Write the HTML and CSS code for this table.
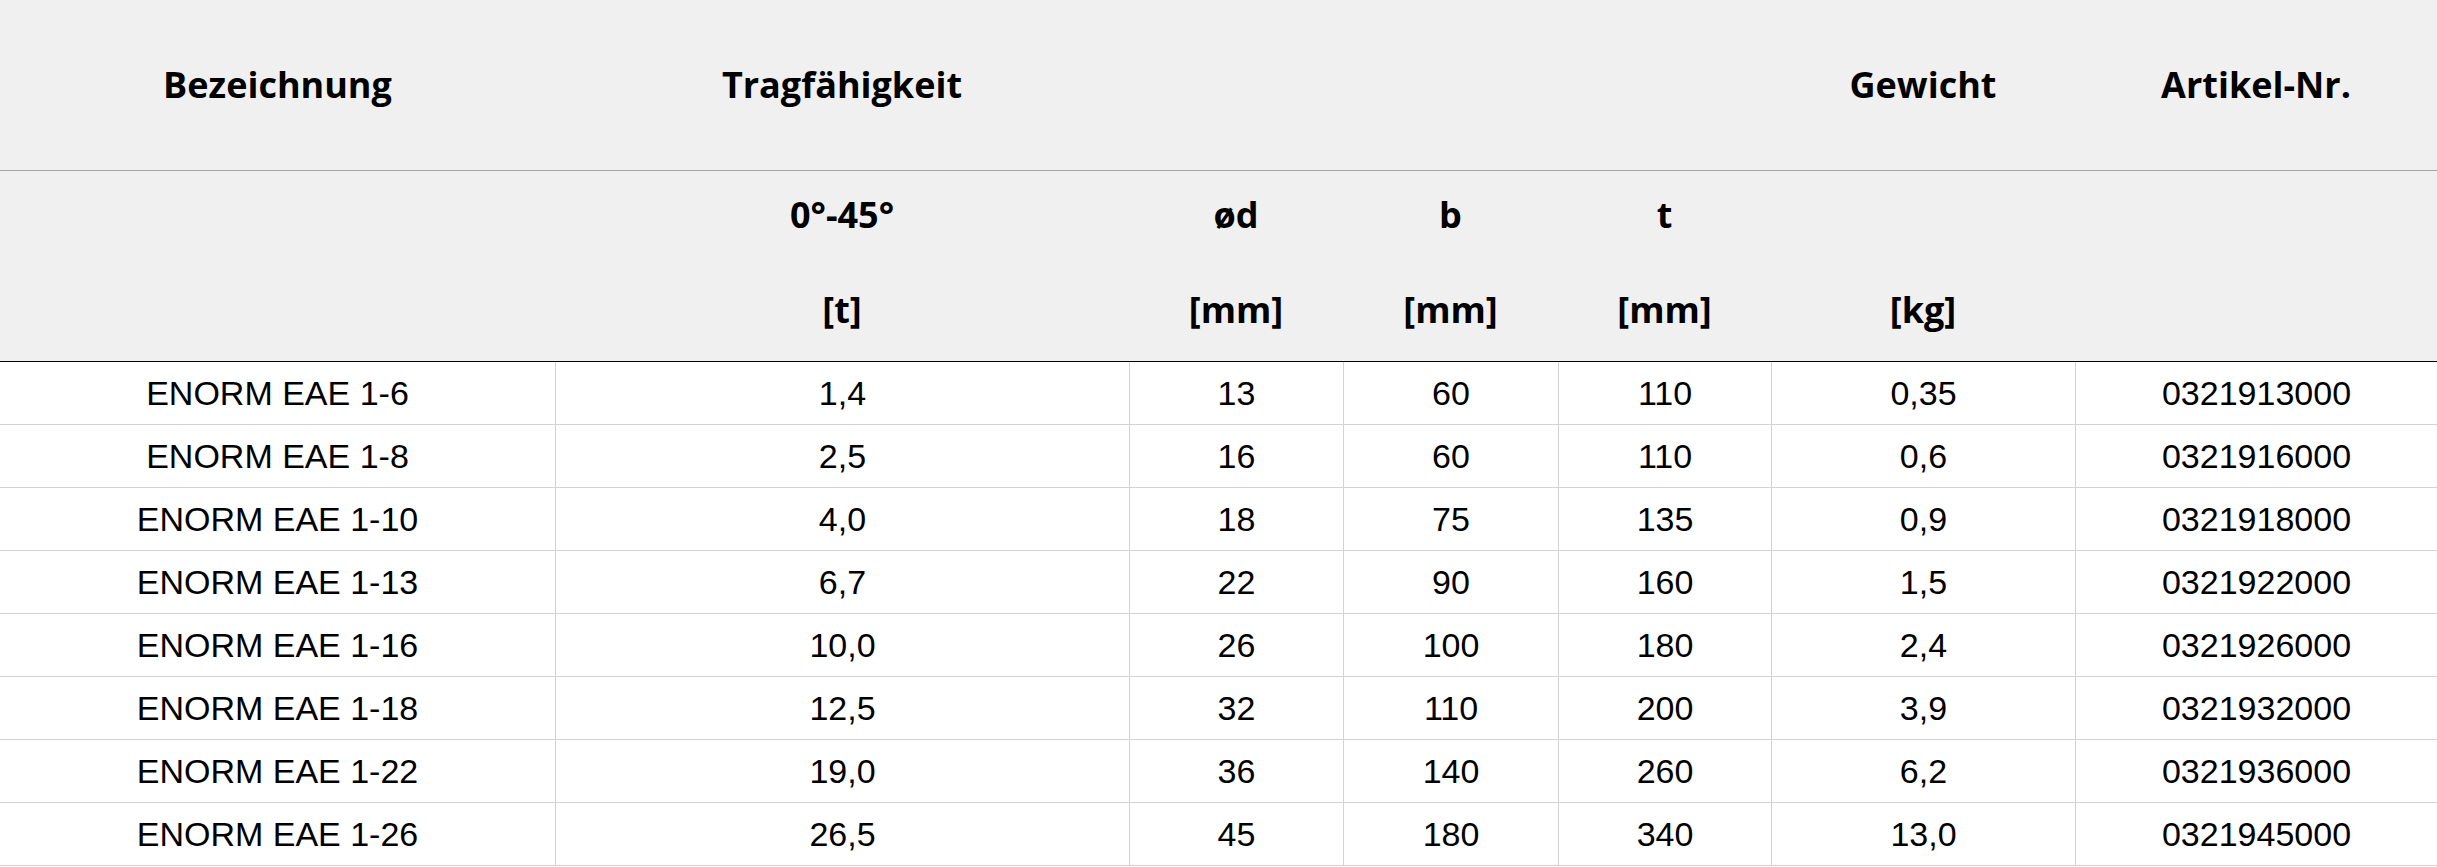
FILE: index.html
```html
<!DOCTYPE html>
<html lang="de">
<head>
<meta charset="utf-8">
<title>ENORM EAE</title>
<link rel="stylesheet" href="styles.css">
</head>
<body>
<table class="spec">
  <colgroup>
    <col class="c1"><col class="c2"><col class="c3"><col class="c4"><col class="c5"><col class="c6"><col class="c7">
  </colgroup>
  <thead>
    <tr class="h1">
      <th>Bezeichnung</th><th>Tragfähigkeit</th><th></th><th></th><th></th><th>Gewicht</th><th>Artikel-Nr.</th>
    </tr>
    <tr class="h2">
      <th></th><th>0°-45°</th><th>ød</th><th>b</th><th>t</th><th></th><th></th>
    </tr>
    <tr class="h3">
      <th></th><th>[t]</th><th>[mm]</th><th>[mm]</th><th>[mm]</th><th>[kg]</th><th></th>
    </tr>
  </thead>
  <tbody>
    <tr><td>ENORM EAE 1-6</td><td>1,4</td><td>13</td><td>60</td><td>110</td><td>0,35</td><td>0321913000</td></tr>
    <tr><td>ENORM EAE 1-8</td><td>2,5</td><td>16</td><td>60</td><td>110</td><td>0,6</td><td>0321916000</td></tr>
    <tr><td>ENORM EAE 1-10</td><td>4,0</td><td>18</td><td>75</td><td>135</td><td>0,9</td><td>0321918000</td></tr>
    <tr><td>ENORM EAE 1-13</td><td>6,7</td><td>22</td><td>90</td><td>160</td><td>1,5</td><td>0321922000</td></tr>
    <tr><td>ENORM EAE 1-16</td><td>10,0</td><td>26</td><td>100</td><td>180</td><td>2,4</td><td>0321926000</td></tr>
    <tr><td>ENORM EAE 1-18</td><td>12,5</td><td>32</td><td>110</td><td>200</td><td>3,9</td><td>0321932000</td></tr>
    <tr><td>ENORM EAE 1-22</td><td>19,0</td><td>36</td><td>140</td><td>260</td><td>6,2</td><td>0321936000</td></tr>
    <tr><td>ENORM EAE 1-26</td><td>26,5</td><td>45</td><td>180</td><td>340</td><td>13,0</td><td>0321945000</td></tr>
  </tbody>
</table>
</body>
</html>
```
FILE: styles.css
```css
html, body {
  margin: 0;
  padding: 0;
  background: #ffffff;
}
.spec {
  width: 2437px;
  table-layout: fixed;
  border-collapse: separate;
  border-spacing: 0;
  color: #000;
}
.c1 { width: 555px; }
.c2 { width: 574px; }
.c3 { width: 214px; }
.c4 { width: 215px; }
.c5 { width: 213px; }
.c6 { width: 304px; }
.c7 { width: 362px; }
.spec th {
  box-sizing: border-box;
  background: #f0f0f0;
  font-family: "Open Sans", "Liberation Sans", sans-serif;
  font-weight: 700;
  font-size: 36px;
  line-height: 40px;
  padding: 0;
  text-align: center;
  vertical-align: middle;
  white-space: nowrap;
}
.h1 th {
  height: 171px;
  border-bottom: 1px solid #a3a3a3;
}
.h2 th {
  height: 95px;
  padding-bottom: 8px;
}
.h3 th {
  height: 96px;
  padding-bottom: 8px;
  border-bottom: 1px solid #000;
}
.spec td {
  box-sizing: border-box;
  height: 63px;
  padding: 0;
  font-family: "Liberation Sans", Arial, sans-serif;
  font-size: 34px;
  line-height: 40px;
  text-align: center;
  vertical-align: middle;
  white-space: nowrap;
  border-bottom: 1px solid #d3d3d3;
}
.spec td + td {
  border-left: 1px solid #d3d3d3;
}
```
